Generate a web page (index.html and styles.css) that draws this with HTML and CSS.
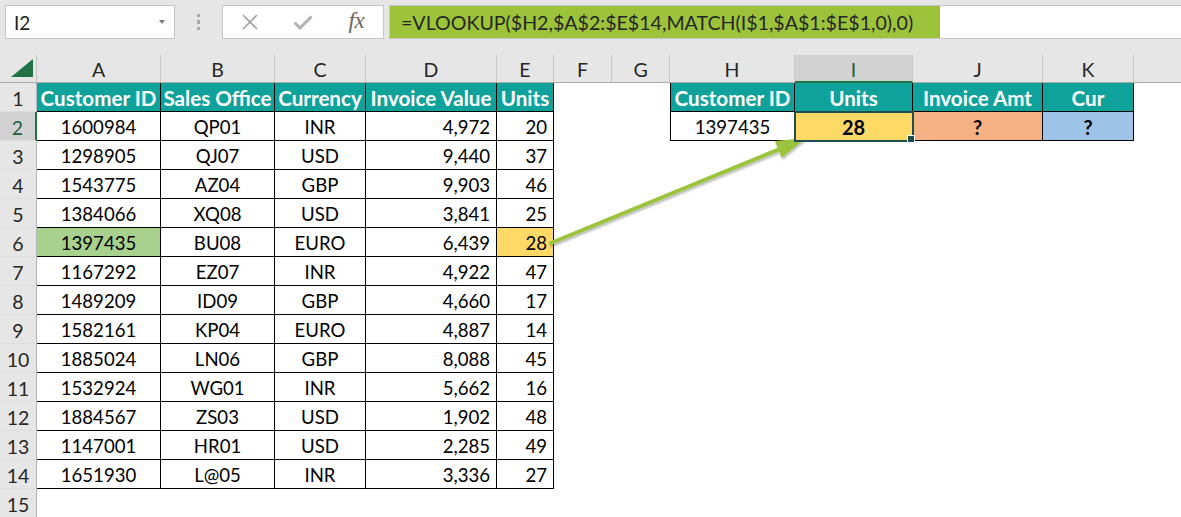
FILE: index.html
```html
<!DOCTYPE html>
<html>
<head>
<meta charset="utf-8">
<link rel="stylesheet" href="styles.css">
</head>
<body>
<div class="topbar">
  <div class="namebox"><span>I2</span><span class="caret"></span></div>
  <div class="grip"><span></span><span></span><span></span></div>
  <div class="fxbox">
    <div class="slot"><svg width="18" height="16" viewBox="0 0 18 16"><path d="M2 1 L16 15 M16 1 L2 15" stroke="#a3a3a3" stroke-width="1.6" fill="none"/></svg></div>
    <div class="slot"><svg width="20" height="15" viewBox="0 0 20 15"><path d="M1.5 7.5 L7 13 L18.5 1.5" stroke="#b3b3b3" stroke-width="3" fill="none"/></svg></div>
    <div class="slot fx">fx</div>
  </div>
  <div class="formula"><div class="hl">=VLOOKUP($H2,$A$2:$E$14,MATCH(I$1,$A$1:$E$1,0),0)</div></div>
</div>

<div class="sheet">
  <div class="corner"><svg width="22" height="18" viewBox="0 0 22 18"><polygon points="22,0 22,18 0,18" fill="#217346"/></svg></div>
  <div class="ch">A</div><div class="ch">B</div><div class="ch">C</div><div class="ch">D</div><div class="ch">E</div><div class="ch">F</div><div class="ch">G</div><div class="ch">H</div><div class="ch chsel">I</div><div class="ch">J</div><div class="ch">K</div><div class="ch chend"></div>

  <div class="rh">1</div>
  <div class="t h">Customer ID</div><div class="t h">Sales Office</div><div class="t h">Currency</div><div class="t h">Invoice Value</div><div class="t h">Units</div>
  <div class="t h lead">Customer ID</div><div class="t h">Units</div><div class="t h">Invoice Amt</div><div class="t h">Cur</div>

  <div class="rh rhsel">2</div>
  <div class="t">1600984</div><div class="t">QP01</div><div class="t">INR</div><div class="t r">4,972</div><div class="t r">20</div>
  <div class="t lead">1397435</div><div class="t sel yellow bold">28</div><div class="t orange bold">?</div><div class="t blue bold">?</div>

  <div class="rh">3</div>
  <div class="t">1298905</div><div class="t">QJ07</div><div class="t">USD</div><div class="t r">9,440</div><div class="t r">37</div>
  <div class="rh">4</div>
  <div class="t">1543775</div><div class="t">AZ04</div><div class="t">GBP</div><div class="t r">9,903</div><div class="t r">46</div>
  <div class="rh">5</div>
  <div class="t">1384066</div><div class="t">XQ08</div><div class="t">USD</div><div class="t r">3,841</div><div class="t r">25</div>
  <div class="rh">6</div>
  <div class="t green">1397435</div><div class="t">BU08</div><div class="t">EURO</div><div class="t r">6,439</div><div class="t r yellow">28</div>
  <div class="rh">7</div>
  <div class="t">1167292</div><div class="t">EZ07</div><div class="t">INR</div><div class="t r">4,922</div><div class="t r">47</div>
  <div class="rh">8</div>
  <div class="t">1489209</div><div class="t">ID09</div><div class="t">GBP</div><div class="t r">4,660</div><div class="t r">17</div>
  <div class="rh">9</div>
  <div class="t">1582161</div><div class="t">KP04</div><div class="t">EURO</div><div class="t r">4,887</div><div class="t r">14</div>
  <div class="rh">10</div>
  <div class="t">1885024</div><div class="t">LN06</div><div class="t">GBP</div><div class="t r">8,088</div><div class="t r">45</div>
  <div class="rh">11</div>
  <div class="t">1532924</div><div class="t">WG01</div><div class="t">INR</div><div class="t r">5,662</div><div class="t r">16</div>
  <div class="rh">12</div>
  <div class="t">1884567</div><div class="t">ZS03</div><div class="t">USD</div><div class="t r">1,902</div><div class="t r">48</div>
  <div class="rh">13</div>
  <div class="t">1147001</div><div class="t">HR01</div><div class="t">USD</div><div class="t r">2,285</div><div class="t r">49</div>
  <div class="rh">14</div>
  <div class="t">1651930</div><div class="t">L@05</div><div class="t">INR</div><div class="t r">3,336</div><div class="t r">27</div>
  <div class="rh">15</div>
</div>

<svg class="arrow" width="1181" height="517" viewBox="0 0 1181 517">
  <defs>
    <filter id="sh" x="-10%" y="-20%" width="120%" height="140%">
      <feDropShadow dx="1" dy="2" stdDeviation="1.2" flood-color="#000" flood-opacity="0.28"/>
    </filter>
  </defs>
  <g filter="url(#sh)">
    <line x1="551" y1="243" x2="781" y2="148.5" stroke="#9bc33c" stroke-width="4" stroke-linecap="round"/>
    <polygon points="806,138 781.7,157.7 774.9,141.1" fill="#9bc33c"/>
  </g>
</svg>
</body>
</html>
```

FILE: styles.css
```css
* { box-sizing: border-box; }
html, body { margin: 0; padding: 0; }
body {
  width: 1181px;
  height: 517px;
  overflow: hidden;
  background: #fff;
  font-family: Lato, "Liberation Sans", sans-serif;
  color: #000;
  position: relative;
}

/* formula bar */
.topbar {
  height: 55px;
  background: #e6e6e6;
  display: flex;
  align-items: flex-start;
  padding: 5px 0 0 5px;
}
.namebox {
  width: 170px;
  height: 34px;
  background: #fff;
  border: 1px solid #c6c6c6;
  display: flex;
  align-items: center;
  justify-content: space-between;
  padding: 0 9px 0 8px;
  font-size: 19px;
  color: #222;
}
.caret {
  width: 0;
  height: 0;
  border-left: 3.5px solid transparent;
  border-right: 3.5px solid transparent;
  border-top: 4px solid #7a7a7a;
}
.grip {
  width: 47px;
  height: 34px;
  display: flex;
  flex-direction: column;
  align-items: center;
  justify-content: center;
  gap: 3px;
}
.grip span { width: 3.5px; height: 3.5px; background: #a8a8a8; }
.fxbox {
  width: 162px;
  height: 34px;
  background: #fff;
  border: 1px solid #c6c6c6;
  display: flex;
}
.slot {
  width: 54px;
  height: 100%;
  display: flex;
  align-items: center;
  justify-content: center;
}
.fx {
  font-family: "Liberation Serif", "DejaVu Serif", serif;
  font-style: italic;
  font-size: 23px;
  color: #666;
  padding-bottom: 2px;
  letter-spacing: -0.5px;
}
.formula {
  flex: 1;
  height: 34px;
  margin-left: 5px;
  background: #fff;
  border: 1px solid #c6c6c6;
  border-right: none;
}
.hl {
  width: 550px;
  height: 100%;
  background: #9dc33b;
  display: flex;
  align-items: center;
  padding-left: 11px;
  font-size: 19.6px;
  color: #262626;
  white-space: nowrap;
  overflow: hidden;
}

/* sheet grid */
.sheet {
  display: grid;
  grid-template-columns: 37px 124px 114px 91px 131px 57px 58px 58px 125px 118px 130px 91px 1fr;
  grid-template-rows: 28px;
  grid-auto-rows: 29px;
  font-size: 18.6px;
}
.corner {
  background: #e6e6e6;
  border-right: 1px solid #c6c6c6;
  border-bottom: 1px solid #ababab;
  display: flex;
  align-items: flex-end;
  justify-content: flex-end;
  padding: 0 3px 5px 0;
}
.ch {
  background: #e6e6e6;
  border-right: 1px solid #c8c8c8;
  border-bottom: 1px solid #ababab;
  display: flex;
  align-items: center;
  justify-content: center;
  color: #262626;
  font-size: 19.5px;
  padding-top: 2px;
}
.chend { border-right: none; }
.chsel {
  background: #d2d2d2;
  border-bottom: 2px solid #217346;
  color: #1d5f45;
}
.rh {
  grid-column: 1;
  background: #e6e6e6;
  border-right: 1px solid #b5b5b5;
  border-bottom: 1px solid #dcdcdc;
  display: flex;
  align-items: center;
  justify-content: center;
  color: #262626;
  font-size: 19.5px;
  padding-top: 2px;
}
.rhsel {
  background: #d2d2d2;
  border-right: 2px solid #217346;
  color: #1d5f45;
}
.t {
  border-right: 1px solid #000;
  border-bottom: 1px solid #000;
  display: flex;
  align-items: center;
  justify-content: center;
  white-space: nowrap;
  overflow: hidden;
  padding-top: 2px;
}
.lead { grid-column: 9; border-left: 1px solid #000; }
.r { justify-content: flex-end; padding-right: 6px; }
.h { background: #0fa29b; color: #fff; font-weight: 700; font-size: 20.6px; }
.bold { font-weight: 700; font-size: 20px; }
.yellow { background: #ffd966; }
.orange { background: #f4b183; }
.blue { background: #9dc3e6; }
.green { background: #a9d18e; }
.sel {
  position: relative;
  overflow: visible;
  outline: 2px solid #1d4f50;
  outline-offset: -1px;
  z-index: 1;
}
.sel::after {
  content: "";
  position: absolute;
  right: -3px;
  bottom: -3px;
  width: 6px;
  height: 6px;
  background: #1d4f50;
  border: 1px solid #fff;
}

.arrow {
  position: absolute;
  left: 0;
  top: 0;
  pointer-events: none;
}
```
